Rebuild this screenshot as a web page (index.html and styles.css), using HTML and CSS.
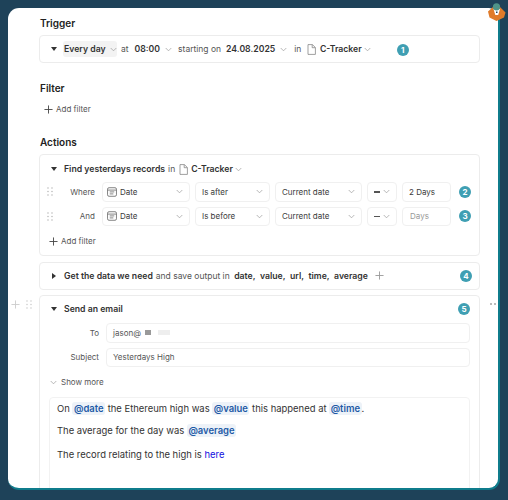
FILE: index.html
```html
<!DOCTYPE html>
<html lang="en">
<head>
    <meta charset="UTF-8">
    <title>Automation</title>
    <link rel="stylesheet" href="styles.css">
</head>
<body>
    <svg width="0" height="0" class="defs">
        <symbol id="chev" viewBox="0 0 8 5"><path d="M.8.8 4 4 7.2.8" fill="none" stroke="#9a9a9a" stroke-width=".8"/></symbol>
        <symbol id="plus" viewBox="0 0 10 10"><path d="M5 .5v9M.5 5h9" fill="none" stroke="currentColor" stroke-width="1"/></symbol>
        <symbol id="doc" viewBox="0 0 9 11"><path d="M1 .6h4.4L8.4 3.500v6.900H1zM5.200.8v2.900h3" fill="none" stroke="#777" stroke-width=".7"/></symbol>
        <symbol id="cal" viewBox="0 0 11 11"><rect x=".6" y=".8" width="9.800" height="9.400" rx="1.600" fill="none" stroke="#555" stroke-width=".8"/><path d="M.8 3.400h9.400M3 5.400h5M3 7.600h4" stroke="#555" stroke-width=".8"/></symbol>
        <symbol id="grip" viewBox="0 0 6 9"><path d="M1 1h.01M5 1h.01M1 4.500h.01M5 4.500h.01M1 8h.01M5 8h.01" stroke="#aaa" stroke-width="1.300" stroke-linecap="round"/></symbol>
    </svg>

    <div class="window">
        <h2>Trigger</h2>
        <section class="card trigger">
            <span class="tri"></span>
            <span class="pill"><b>Every day</b><svg class="chev"><use href="#chev"/></svg></span>
            <span class="mute at">at</span>
            <b class="time">08:00</b><svg class="chev"><use href="#chev"/></svg>
            <span class="mute starting">starting on</span>
            <b class="date">24.08.2025</b><svg class="chev"><use href="#chev"/></svg>
            <span class="mute in">in</span>
            <svg class="doc"><use href="#doc"/></svg>
            <b>C-Tracker</b><svg class="chev tight"><use href="#chev"/></svg>
            <span class="badge first">1</span>
        </section>

        <h2 class="filter-head">Filter</h2>
        <div class="add-filter top"><svg class="plus"><use href="#plus"/></svg>Add filter</div>

        <h2 class="actions-head">Actions</h2>
        <section class="card find">
            <div class="line">
                <span class="tri"></span>
                <b>Find yesterdays records</b><span class="mute in-find">in</span>
                <svg class="doc"><use href="#doc"/></svg>
                <b>C-Tracker</b><svg class="chev tight"><use href="#chev"/></svg>
            </div>
            <div class="row">
                <svg class="grip"><use href="#grip"/></svg>
                <span class="row-label">Where</span>
                <span class="field w-date"><svg class="cal"><use href="#cal"/></svg>Date<svg class="chev end"><use href="#chev"/></svg></span>
                <span class="field w-op">Is after<svg class="chev end"><use href="#chev"/></svg></span>
                <span class="field w-cur">Current date<svg class="chev end"><use href="#chev"/></svg></span>
                <span class="field w-sign"><i class="dash"></i><svg class="chev end"><use href="#chev"/></svg></span>
                <span class="field w-days">2 Days</span>
                <span class="badge">2</span>
            </div>
            <div class="row">
                <svg class="grip"><use href="#grip"/></svg>
                <span class="row-label">And</span>
                <span class="field w-date"><svg class="cal"><use href="#cal"/></svg>Date<svg class="chev end"><use href="#chev"/></svg></span>
                <span class="field w-op">Is before<svg class="chev end"><use href="#chev"/></svg></span>
                <span class="field w-cur">Current date<svg class="chev end"><use href="#chev"/></svg></span>
                <span class="field w-sign"><i class="dash"></i><svg class="chev end"><use href="#chev"/></svg></span>
                <span class="field w-days placeholder">Days</span>
                <span class="badge">3</span>
            </div>
            <div class="add-filter inner"><svg class="plus"><use href="#plus"/></svg>Add filter</div>
        </section>

        <section class="card getdata">
            <span class="tri right"></span>
            <b>Get the data we need</b><span class="mute and">and save output in</span>
            <b class="var">date,</b><b class="var">value,</b><b class="var">url,</b><b class="var">time,</b><b class="var">average</b>
            <svg class="plus add-var"><use href="#plus"/></svg>
            <span class="badge push">4</span>
        </section>

        <section class="card email">
            <div class="line head">
                <span class="tri"></span>
                <b>Send an email</b>
                <span class="badge push">5</span>
            </div>
            <div class="to-row">
                <span class="to-label">To</span>
                <span class="field grow">jason@<i class="blot dark"></i><i class="blot light"></i></span>
            </div>
            <div class="to-row">
                <span class="to-label">Subject</span>
                <span class="field grow">Yesterdays High</span>
            </div>
            <div class="show-more"><svg class="chev more"><use href="#chev"/></svg>Show more</div>
            <div class="editor">
                <p>On <span class="tag">@date</span> the Ethereum high was <span class="tag">@value</span> this happened at <span class="tag">@time</span>.</p>
                <p class="gap">The average for the day was <span class="tag">@average</span></p>
                <p>The record relating to the high is <a href="#">here</a></p>
            </div>
        </section>

        <div class="side-tools">
            <svg class="plus"><use href="#plus"/></svg>
            <svg class="grip"><use href="#grip"/></svg>
        </div>
        <div class="side-dots"></div>
    </div>

    <svg class="logo" width="21" height="21" viewBox="0 0 21 21">
        <path d="M2 9.500 7 5H14L19.500 10.500 18 15.500 10.500 19 3.500 15.500Z" fill="#e07b2a"/>
        <path d="M7.500 7H14L12.200 13H9.300Z" fill="#fff"/>
        <path d="M10 9.500h1.500v1.500H10z" fill="#1e4259"/>
        <circle cx="10.500" cy="4.800" r="3.600" fill="#4f9488"/>
    </svg>
</body>
</html>
```

FILE: styles.css
```css
* {
    box-sizing: border-box;
}

html, body {
    height: 500px;
    overflow: hidden;
}

body {
    margin: 0;
    padding: 8px 0 0 8px;
    background-color: #1e4259;
    font-family: 'Inter', 'Liberation Sans', sans-serif;
    font-size: 8.5px;
    color: #333;
    position: relative;
}

.defs {
    position: absolute;
}

.window {
    width: 492px;
    height: 482px;
    padding: 8px 18px 0 31px;
    background-color: white;
    border-right: 2px solid #0f7c8c;
    border-bottom: 2px solid #0f7c8c;
    border-radius: 11px;
    overflow: hidden;
    position: relative;
}

h2 {
    margin: 0;
    font-size: 10px;
    line-height: 15px;
    font-weight: 600;
    color: #222;
    padding-left: 1px;
}

b {
    font-size: 8.7px;
    font-weight: 600;
    color: #333;
}

.mute {
    color: #555;
}

.card {
    border: 1px solid #ececec;
    border-radius: 4px;
}

.trigger {
    margin-top: 4px;
    height: 28px;
    display: flex;
    align-items: center;
    padding-left: 11px;
}

.tri {
    width: 0;
    height: 0;
    margin-right: 7px;
    border-left: 3px solid transparent;
    border-right: 3px solid transparent;
    border-top: 4px solid #333;
}

.tri.right {
    border-top: 3px solid transparent;
    border-bottom: 3px solid transparent;
    border-left: 4px solid #333;
    border-right: 0;
    margin-right: 8px;
    margin-left: 0;
}

.pill {
    display: flex;
    align-items: center;
    width: 54px;
    height: 16px;
    padding-left: 1px;
    margin-left: -1px;
    background-color: #f3f3f3;
    border-radius: 3px;
    flex: none;
}

.chev {
    width: 7px;
    height: 5px;
    margin-left: 5px;
    flex: none;
}

.pill .chev {
    margin-left: 4px;
}

.chev.tight {
    margin-left: 2px;
}

.at { margin-left: 4px; }
.time { margin-left: 6px; }
.starting { margin-left: 6px; }
.date { margin-left: 5px; }
.in { margin-left: 7px; }

.doc {
    width: 9px;
    height: 11px;
    margin: 0 3.5px 0 6px;
    flex: none;
}

.badge {
    width: 12px;
    height: 12px;
    border-radius: 50%;
    background-color: #3f9fb3;
    color: white;
    font-size: 8px;
    font-weight: 700;
    line-height: 12px;
    text-align: center;
    flex: none;
}

.badge.first {
    margin-left: 26px;
    margin-top: 1px;
}

.badge.push {
    margin-left: auto;
}

.filter-head {
    margin-top: 17.5px;
}

.add-filter {
    display: flex;
    align-items: center;
    height: 12px;
    font-size: 8px;
    color: #555;
}

.add-filter .plus {
    width: 9px;
    height: 9px;
    margin-right: 3px;
    color: #444;
}

.add-filter.top {
    margin: 7.5px 0 0 5px;
}

.add-filter.inner {
    margin: 9px 0 0 -2px;
}

.actions-head {
    margin-top: 20px;
}

.find {
    margin-top: 4px;
    height: 101.5px;
    padding: 8px 8px 0 11px;
}

.line {
    display: flex;
    align-items: center;
    height: 12px;
}

.in-find {
    margin-left: 3px;
}

.find .doc {
    margin-left: 4px;
    margin-right: 3px;
}

.row {
    display: flex;
    align-items: center;
    height: 19.5px;
    margin-top: 5px;
    margin-left: -4px;
}

.line + .row {
    margin-top: 7px;
}

.grip {
    width: 6px;
    height: 9px;
    flex: none;
}

.row-label {
    width: 42px;
    margin-right: 7px;
    text-align: right;
    color: #555;
    font-size: 8px;
    flex: none;
}

.field {
    display: flex;
    align-items: center;
    height: 19.5px;
    margin-right: 5px;
    padding: 0 6px;
    border: 1px solid #f0f0f0;
    border-radius: 4px;
    font-size: 8px;
    color: #3a3a3a;
    flex: none;
}

.chev.end {
    margin-left: auto;
    margin-right: 0;
}

.cal {
    width: 10px;
    height: 10px;
    margin-right: 3px;
    margin-left: -2px;
}

.w-date { width: 88px; }
.w-op { width: 75px; }
.w-cur { width: 87px; }
.w-sign { width: 30px; }
.w-days { width: 49px; margin-right: 8px; }

.dash {
    width: 6px;
    height: 1.500px;
    background-color: #555;
}

.placeholder {
    color: #999;
    padding-left: 7px;
}

.getdata {
    margin-top: 6px;
    height: 28px;
    display: flex;
    align-items: center;
    padding: 0 7px 0 12px;
}

.and {
    margin-left: 3px;
}

.var {
    margin-left: 4.5px;
}

.add-var {
    width: 9px;
    height: 9px;
    margin-left: 7px;
    color: #999;
}

.email {
    margin-top: 5px;
    height: 240px;
    padding: 7.5px 9px 0 11px;
}

.to-row {
    display: flex;
    align-items: center;
    margin-bottom: 5px;
}

.email .head {
    margin-bottom: 8px;
}

.to-label {
    width: 48px;
    margin-right: 7px;
    text-align: right;
    color: #555;
    font-size: 8px;
    flex: none;
}

.grow {
    flex: 1;
    margin-right: 0;
    color: #555;
}

.blot {
    display: inline-block;
    height: 5px;
}

.dark {
    width: 6px;
    margin-left: 4px;
    background-color: #999;
}

.light {
    width: 12px;
    margin-left: 7px;
    background-color: #eee;
}

.show-more {
    display: flex;
    align-items: center;
    height: 12px;
    margin-top: 9px;
    font-size: 8px;
    color: #555;
}

.chev.more {
    margin: 0 4px 0 -1px;
}

.editor {
    margin-top: 9px;
    margin-left: -2px;
    height: 120px;
    padding: 4px 7px;
    border: 1px solid #f2f2f2;
    border-radius: 4px;
    font-size: 9.45px;
    color: #333;
}

.editor p {
    margin: 0 0 7.5px;
    line-height: 14px;
}

.editor p.gap {
    margin-bottom: 10px;
}

.tag {
    padding: 1px 1.5px;
    background-color: #edf2f8;
    border-radius: 3px;
    color: #1d5aa6;
    font-weight: 600;
}

.editor a {
    color: #1010e0;
    text-decoration: none;
}

.side-tools {
    position: absolute;
    left: 3px;
    top: 291.5px;
    display: flex;
    align-items: center;
    gap: 6px;
}

.side-tools .plus {
    width: 9px;
    height: 9px;
    color: #ccc;
}

.side-tools .grip {
    opacity: .7;
}

.side-dots {
    position: absolute;
    left: 482px;
    top: 295px;
    width: 6px;
    height: 2px;
    border-left: 2px solid #bbb;
    border-right: 2px solid #bbb;
}

.logo {
    position: absolute;
    left: 486px;
    top: 2px;
}
```
